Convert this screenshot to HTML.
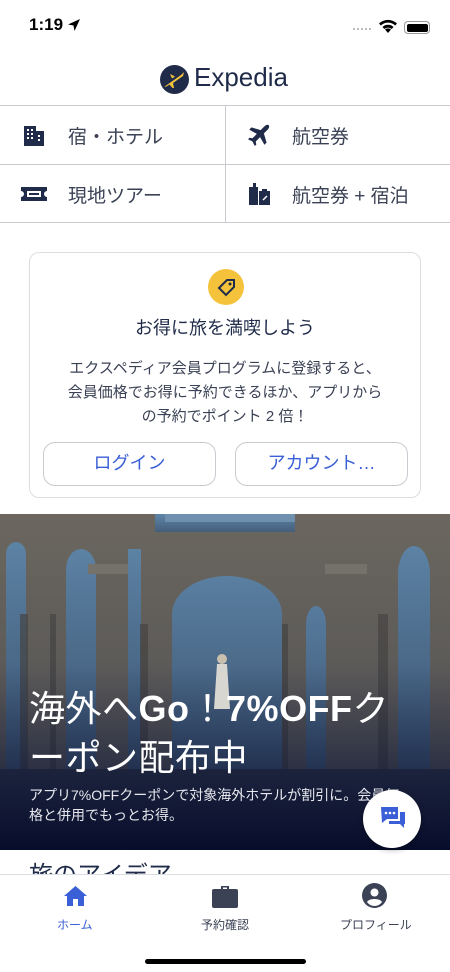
<!DOCTYPE html>
<html><head><meta charset="utf-8"><style>
*{margin:0;padding:0;box-sizing:border-box}
body{width:450px;height:972px;background:#fff;font-family:"Liberation Sans","Noto Sans CJK JP",sans-serif;position:relative;overflow:hidden;color:#1f2b49}
.abs{position:absolute}
.grid{position:absolute;top:105px;left:0;width:450px;height:118px;border-top:1px solid #c9cad0;border-bottom:1px solid #c9cad0}
.cell{position:absolute;height:58px;display:flex;align-items:center;font-size:19px;color:#3b4255}
.card{position:absolute;left:29px;top:252px;width:392px;height:246px;border:1px solid #dcdde2;border-radius:10px;text-align:center}
.btn{position:absolute;top:189px;width:173px;height:44px;border:1.5px solid #c9cad0;border-radius:12px;color:#3a5fd6;font-size:18px;line-height:41px}
</style></head><body>
<div class="abs" style="left:29px;top:15px;font-size:17px;font-weight:bold;color:#000">1:19</div>
<svg class="abs" style="left:67px;top:18px" width="14" height="14" viewBox="0 0 14 14"><path d="M13 1L1 6.5 6.5 7.5 7.5 13z" fill="#000"/></svg>
<div class="abs" style="left:353px;top:28px;width:18px;border-top:2px dotted #bbb"></div>
<svg class="abs" style="left:378px;top:19px" width="20" height="15" viewBox="0 0 20 15"><path d="M10 14l3-3.5a4.5 4.5 0 0 0-6 0z M4.5 8a8 8 0 0 1 11 0l-1.8 2a5.5 5.5 0 0 0-7.4 0z M1 4.5a13 13 0 0 1 18 0l-1.8 2a10.5 10.5 0 0 0-14.4 0z" fill="#000"/></svg>
<div class="abs" style="left:404px;top:21px;width:26px;height:13px;border:1.5px solid #999;border-radius:4px;padding:1.5px"><div style="width:100%;height:100%;background:#000;border-radius:2px"></div></div>
<svg class="abs" style="left:160px;top:65px" width="29" height="29" viewBox="0 0 29 29"><circle cx="14.5" cy="14.5" r="14.5" fill="#1f2b49"/><path d="M4 22L21 10l3-3-1 4-10 7 1 5-1.5 0-3-3.5-3 2z M10 9l5 2.5-3 2z" fill="#f5c33b"/></svg>
<div class="abs" style="left:194px;top:62px;font-size:26px;color:#1f2b49">Expedia</div>
<div class="grid">
<div class="abs" style="left:225px;top:0;height:117px;border-left:1px solid #c9cad0"></div>
<div class="abs" style="left:0;top:58px;width:450px;border-top:1px solid #c9cad0"></div>
</div>
<div class="cell" style="left:22px;top:106px"><svg width="24" height="24" viewBox="0 0 24 24"><path d="M2 3h12v5h8v15H2z" fill="#1f2b49"/><g fill="#fff"><rect x="5" y="6" width="2" height="2"/><rect x="9" y="6" width="2" height="2"/><rect x="5" y="10" width="2" height="2"/><rect x="9" y="10" width="2" height="2"/><rect x="5" y="14" width="2" height="2"/><rect x="9" y="14" width="2" height="2"/><rect x="16" y="12" width="2" height="2"/><rect x="16" y="16" width="2" height="2"/></g></svg><span style="margin-left:22px">宿・ホテル</span></div>
<div class="cell" style="left:246px;top:106px"><svg width="26" height="26" viewBox="0 0 24 24"><path d="M21 3c-1-1-3 0-4 1l-3.5 3.5L5 5 3 7l7 4-4 4-3-.5L2 16l4 2 2 4 1.5-1-.5-3 4-4 4 7 2-2-2.5-8.5L20 7c1-1 2-3 1-4z" fill="#1f2b49"/></svg><span style="margin-left:20px">航空券</span></div>
<div class="cell" style="left:21px;top:165px"><svg width="26" height="18" viewBox="0 0 26 18"><path d="M0 2h26v4a3 3 0 0 0 0 6v4H0v-4a3 3 0 0 0 0-6z" fill="#1f2b49"/><rect x="6" y="6" width="14" height="6" fill="#fff"/><rect x="8" y="8" width="10" height="2" fill="#1f2b49"/></svg><span style="margin-left:21px">現地ツアー</span></div>
<div class="cell" style="left:246px;top:165px"><svg width="26" height="26" viewBox="0 0 26 26"><path d="M3 6h4V2h3v4h2v18H3z" fill="#1f2b49"/><path d="M13 10h3V8h5v2h3v14H13z" fill="#1f2b49"/><path d="M17 19l4-4" stroke="#fff" stroke-width="1.5"/></svg><span style="margin-left:20px">航空券 + 宿泊</span></div>
<div class="card">
<svg class="abs" style="left:178px;top:16px" width="36" height="36" viewBox="0 0 36 36"><circle cx="18" cy="18" r="18" fill="#f5c33b"/><path d="M11 19l8-8h7v7l-8 8z" fill="none" stroke="#1f2b49" stroke-width="2"/><circle cx="22" cy="15" r="1.5" fill="#1f2b49"/></svg>
<div class="abs" style="left:0;width:100%;top:61px;font-size:18px;color:#1f2b49">お得に旅を満喫しよう</div>
<div class="abs" style="left:0;width:100%;top:104px;font-size:15px;line-height:24px;color:#3b4255">エクスペディア会員プログラムに登録すると、<br>会員価格でお得に予約できるほか、アプリから<br>の予約でポイント 2 倍！</div>
<div class="btn" style="left:13px">ログイン</div>
<div class="btn" style="left:205px">アカウント…</div>
</div>
<div class="abs" style="left:0;top:514px;width:450px;height:336px;overflow:hidden;background:#56789a">
<svg width="450" height="336" viewBox="0 0 450 336" style="position:absolute;left:0;top:0">
<defs><linearGradient id="sh" x1="0" y1="0" x2="0" y2="1"><stop offset="0" stop-color="#0d1535" stop-opacity="0"/><stop offset=".45" stop-color="#0d1535" stop-opacity=".15"/><stop offset=".75" stop-color="#0d1535" stop-opacity=".65"/><stop offset="1" stop-color="#050b2a" stop-opacity=".97"/></linearGradient>
<linearGradient id="sky" x1="0" y1="0" x2="0" y2="1"><stop offset="0" stop-color="#5f86a8"/><stop offset="1" stop-color="#46607c"/></linearGradient></defs>
<rect width="450" height="336" fill="#6b675f"/>
<g fill="url(#sky)">
<path d="M6 336V40a10 12 0 0 1 20 0v296z"/>
<path d="M66 336V55a15 20 0 0 1 30 0v281z"/>
<rect x="128" y="35" width="13" height="301"/>
<rect x="155" y="0" width="140" height="18"/>
<path d="M172 336V100a55 38 0 0 1 110 0v236z"/>
<path d="M306 336V110a10 18 0 0 1 20 0v226z"/>
<path d="M398 336V60a16 28 0 0 1 32 0v276z"/>
<rect x="165" y="0" width="130" height="8" fill="#6f90ae"/>
</g>
<g fill="#4d4a45" opacity=".7"><rect x="20" y="100" width="8" height="236"/><rect x="140" y="110" width="8" height="226"/><rect x="282" y="110" width="6" height="226"/><rect x="378" y="100" width="10" height="236"/><rect x="50" y="100" width="6" height="236"/></g>
<g fill="#7b776e"><rect x="88" y="50" width="40" height="10"/><rect x="325" y="50" width="42" height="10"/></g>
<rect x="0" y="255" width="450" height="81" fill="#3a3f4c"/>
<rect x="0" y="0" width="450" height="336" fill="url(#sh)"/>
<path d="M217 150h10l3 45h-16z" fill="#d8d6d0"/><circle cx="222" cy="145" r="5" fill="#c9bfae"/>
</svg>
</div>
<div class="abs" style="left:29px;top:684px;font-size:36px;color:#fff;line-height:49px;letter-spacing:0.5px">海外へ<b>Go</b>！<b>7%OFF</b>ク<br>ーポン配布中</div>
<div class="abs" style="left:29px;top:785px;font-size:14px;color:#e6e8ee;line-height:20px">アプリ7%OFFクーポンで対象海外ホテルが割引に。会員価<br>格と併用でもっとお得。</div>
<div class="abs" style="left:363px;top:790px;width:58px;height:58px;border-radius:50%;background:#fff;box-shadow:0 2px 6px rgba(0,0,0,.3)"></div>
<svg class="abs" style="left:380px;top:806px" width="26" height="24" viewBox="0 0 26 24"><path d="M1 1h17v12H7l-5 4z" fill="#3a5fd6"/><path d="M20 6h5v12h-1v4l-4-4H9v-3h11z" fill="#3a5fd6"/><g fill="#fff"><circle cx="6" cy="7" r="1.3"/><circle cx="10" cy="7" r="1.3"/><circle cx="14" cy="7" r="1.3"/></g></svg>
<div class="abs" style="left:29px;top:862px;font-size:24px;color:#1f2b49;height:12px;overflow:hidden;line-height:28px">旅のアイデア</div>
<div class="abs" style="left:0;top:874px;width:450px;height:98px;background:#fff;border-top:1px solid #dcdde2"></div>
<svg class="abs" style="left:63px;top:885px" width="25" height="22" viewBox="0 0 25 22"><path d="M12.5 1L1 11h3v10h6v-7h5v7h6V11h3z" fill="#3a5fd6"/></svg>
<div class="abs" style="left:57px;top:916px;font-size:12px;color:#3a5fd6">ホーム</div>
<svg class="abs" style="left:212px;top:884px" width="26" height="24" viewBox="0 0 26 24"><path d="M9 5V2h8v3h7a2 2 0 0 1 2 2v15a2 2 0 0 1-2 2H2a2 2 0 0 1-2-2V7a2 2 0 0 1 2-2zm2 0h4V3.5h-4z" fill="#3b4255"/></svg>
<div class="abs" style="left:201px;top:916px;font-size:12px;color:#3b4255">予約確認</div>
<svg class="abs" style="left:362px;top:883px" width="25" height="25" viewBox="0 0 25 25"><circle cx="12.5" cy="12.5" r="12.5" fill="#3b4255"/><circle cx="12.5" cy="9.5" r="4" fill="#fff"/><path d="M5 19c2-4 13-4 15 0a9 9 0 0 1-15 0z" fill="#fff"/></svg>
<div class="abs" style="left:340px;top:916px;font-size:12px;color:#3b4255">プロフィール</div>
<div class="abs" style="left:145px;top:959px;width:161px;height:5px;border-radius:3px;background:#000"></div>
</body></html>
